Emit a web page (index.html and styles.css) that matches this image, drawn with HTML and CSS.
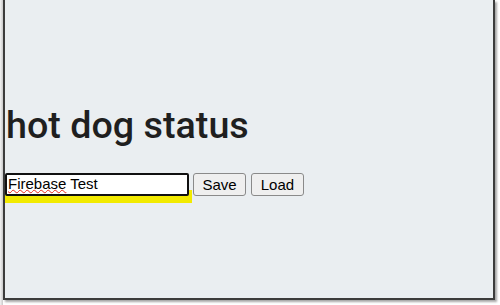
FILE: index.html
```html
<!DOCTYPE html>
<html lang="en">
<head>
<meta charset="utf-8">
<title>hot dog status</title>
<link rel="stylesheet" href="styles.css">
</head>
<body>
<div class="shot">
  <div class="page">
    <h1 class="title">hot dog status</h1>
    <div class="controls">
      <div class="field-wrap">
        <div class="field" role="textbox"><span class="misspelt">Firebase</span> Test</div>
      </div>
      <button class="btn" type="button">Save</button>
      <button class="btn" type="button">Load</button>
    </div>
  </div>
</div>
</body>
</html>
```

FILE: styles.css
```css
html, body {
  margin: 0;
  padding: 0;
  background: #ffffff;
}

body {
  width: 500px;
  height: 305px;
  overflow: hidden;
}

.shot {
  width: 500px;
  height: 305px;
  padding: 0 5px 5px 3px;
  box-sizing: border-box;
  background: linear-gradient(to right, #f4f4f4 0px, #c9c9c9 3px, #ffffff 3px);
}

.page {
  height: 100%;
  box-sizing: border-box;
  background: #eaeef1;
  border-left: 2px solid #3c3c3c;
  border-right: 2px solid #3c3c3c;
  border-bottom: 2px solid #3c3c3c;
  box-shadow: 2px 2px 2px rgba(0, 0, 0, 0.35);
  padding: 103px 0 0 0;
  display: flex;
  flex-direction: column;
}

.title {
  margin: 0 0 0 1px;
  font-family: Roboto, "Open Sans", sans-serif;
  font-weight: 500;
  font-size: 37.7px;
  line-height: 44px;
  color: #1f1f1f;
}

.controls {
  margin-top: 26px;
  display: flex;
  align-items: flex-start;
  gap: 4px;
}

.field-wrap {
  position: relative;
}

.field-wrap::after {
  content: "";
  position: absolute;
  left: 0;
  top: 17px;
  width: 187px;
  height: 13px;
  background: #f2ea00;
  z-index: 0;
}

.field {
  position: relative;
  z-index: 1;
  width: 184px;
  height: 23px;
  box-sizing: border-box;
  border: 2px solid #101010;
  border-radius: 2px;
  background: #ffffff;
  font-family: "Liberation Sans", Arial, sans-serif;
  font-size: 15px;
  line-height: 18px;
  padding: 0 1px;
  color: #000000;
  white-space: nowrap;
}

.misspelt {
  text-decoration: underline wavy #e8261a;
  text-decoration-thickness: 1px;
  text-underline-offset: 0px;
}

.btn {
  height: 23px;
  box-sizing: border-box;
  margin: 0;
  padding: 0 8.5px;
  border: 1px solid #8a8a8a;
  border-radius: 3px;
  background: #efefef;
  font-family: "Liberation Sans", Arial, sans-serif;
  font-size: 15px;
  line-height: 19px;
  color: #000000;
}

.btn + .btn {
  margin-left: 1px;
}
```
